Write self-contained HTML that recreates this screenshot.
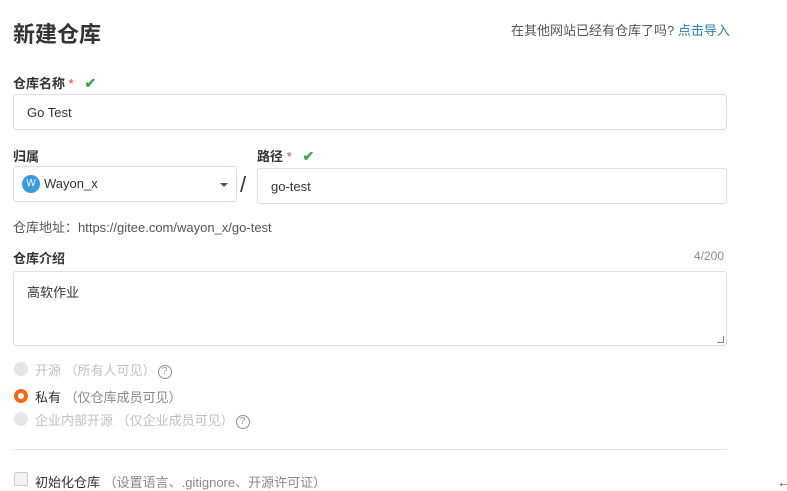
<!DOCTYPE html>
<html><head><meta charset="utf-8"><style>
*{box-sizing:border-box;margin:0;padding:0}
body{width:787px;height:489px;background:#fff;font-family:"Liberation Sans","Noto Sans CJK SC",sans-serif;color:#333;position:relative;overflow:hidden;font-size:13px}
.a{position:absolute;white-space:nowrap}
.lbl{font-weight:bold;font-size:13px;color:#333}
.req{color:#e03c3c;font-weight:normal}
.inp{position:absolute;border:1px solid #dcdfe3;border-radius:3px;background:#fff}
.chk{color:#3aaa4a;font-size:14px;font-weight:bold}
.gray{color:#c0c0c0}
.q{display:inline-block;width:14px;height:14px;border:1.4px solid #8a8f99;border-radius:50%;font-size:10px;line-height:12px;text-align:center;color:#8a8f99;vertical-align:1px;margin-left:2px}
.rad{position:absolute;width:14px;height:14px;border-radius:50%;background:#e6e6e6}
</style></head><body>
<div class="a" style="left:13px;top:17px;font-size:22px;font-weight:bold;color:#333">新建仓库</div>
<div class="a" style="left:511px;top:20px;font-size:13px;color:#555">在其他网站已经有仓库了吗?&nbsp;<span style="color:#2e7db3">点击导入</span></div>

<div class="a lbl" style="left:13px;top:73px">仓库名称 <span class="req">*</span> &nbsp; <span class="chk">✔</span></div>
<div class="inp" style="left:13px;top:94px;width:714px;height:36px"></div>
<div class="a" style="left:27px;top:105px;font-size:13px">Go Test</div>

<div class="a lbl" style="left:13px;top:146px">归属</div>
<div class="inp" style="left:13px;top:166px;width:224px;height:36px"></div>
<div class="a" style="left:22px;top:175px;width:18px;height:18px;border-radius:50%;background:#3a9be0;color:#fff;font-size:10px;text-align:center;line-height:18px">W</div>
<div class="a" style="left:44px;top:176px;font-size:13px">Wayon_x</div>
<div class="a" style="left:220px;top:183px;width:0;height:0;border-left:4px solid transparent;border-right:4px solid transparent;border-top:4px solid #555"></div>
<div class="a" style="left:240px;top:172px;font-size:22px;color:#333">/</div>

<div class="a lbl" style="left:257px;top:146px">路径 <span class="req">*</span> &nbsp; <span class="chk">✔</span></div>
<div class="inp" style="left:257px;top:168px;width:470px;height:36px"></div>
<div class="a" style="left:271px;top:179px;font-size:13px">go-test</div>

<div class="a" style="left:13px;top:217px;font-size:13px;color:#555">仓库地址：https://gitee.com/wayon_x/go-test</div>

<div class="a lbl" style="left:13px;top:248px">仓库介绍</div>
<div class="a" style="left:694px;top:249px;font-size:12px;color:#888">4/200</div>
<div class="inp" style="left:13px;top:271px;width:714px;height:75px"></div>
<div class="a" style="left:27px;top:282px;font-size:13px">高软作业</div>
<div class="a" style="left:717px;top:336px;width:7px;height:7px;border-right:1px solid #888;border-bottom:1px solid #888"></div>

<div class="rad" style="left:14px;top:362px"></div>
<div class="a gray" style="left:35px;top:360px">开源 （所有人可见）<span class="q">?</span></div>
<div class="rad" style="left:14px;top:389px;background:#fff;border:4px solid #f26b14"></div>
<div class="a" style="left:35px;top:387px">私有 <span style="color:#888">（仅仓库成员可见）</span></div>
<div class="rad" style="left:14px;top:412px"></div>
<div class="a gray" style="left:35px;top:410px">企业内部开源 （仅企业成员可见）<span class="q">?</span></div>

<div class="a" style="left:13px;top:449px;width:714px;height:1px;background:#e5e5e5"></div>

<div class="a" style="left:14px;top:472px;width:14px;height:14px;border:1px solid #ccc;border-radius:2px;background:#f2f2f2"></div>
<div class="a" style="left:35px;top:472px">初始化仓库 <span style="color:#888">（设置语言、.gitignore、开源许可证）</span></div>
<div class="a" style="left:777px;top:474px;font-size:14px;color:#555">←</div>
</body></html>
